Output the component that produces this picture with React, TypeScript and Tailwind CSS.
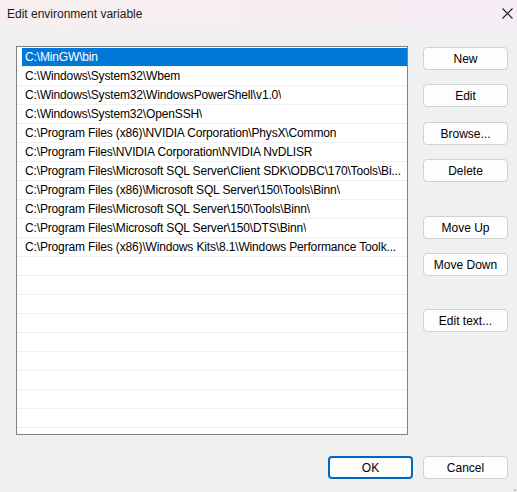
import React from "react";

// Display text as the list shows it (long entries are clipped by the column)
const paths = [
  "C:\\MinGW\\bin",
  "C:\\Windows\\System32\\Wbem",
  "C:\\Windows\\System32\\WindowsPowerShell\\v1.0\\",
  "C:\\Windows\\System32\\OpenSSH\\",
  "C:\\Program Files (x86)\\NVIDIA Corporation\\PhysX\\Common",
  "C:\\Program Files\\NVIDIA Corporation\\NVIDIA NvDLISR",
  "C:\\Program Files\\Microsoft SQL Server\\Client SDK\\ODBC\\170\\Tools\\Bi...",
  "C:\\Program Files (x86)\\Microsoft SQL Server\\150\\Tools\\Binn\\",
  "C:\\Program Files\\Microsoft SQL Server\\150\\Tools\\Binn\\",
  "C:\\Program Files\\Microsoft SQL Server\\150\\DTS\\Binn\\",
  "C:\\Program Files (x86)\\Windows Kits\\8.1\\Windows Performance Toolk...",
];

const TOTAL_ROWS = 20;

const Button: React.FC<{ label: string; primary?: boolean }> = ({ label, primary }) => (
  <button
    className={`w-[85px] h-[23px] shrink-0 rounded-[4px] bg-[#fdfdfd] text-[12px] text-black leading-none ${
      primary ? "border-2 border-[#0067c0]" : "border border-[#d0d0d0]"
    }`}
  >
    {label}
  </button>
);

export default function App() {
  const rows = Array.from({ length: TOTAL_ROWS }, (_, i) => paths[i] ?? "");

  return (
    <div
      className="w-[517px] h-[492px] flex flex-col bg-[#f0f0f0] overflow-hidden relative"
      style={{ fontFamily: '"Liberation Sans", Arial, sans-serif' }}
    >
      {/* Title bar */}
      <div className="h-[27px] shrink-0 flex items-center justify-between pl-[7px] pr-[4px] bg-gradient-to-r from-[#f7efef] to-[#f6ecf4]">
        <span className="text-[12px] text-[#1a1a1a]">Edit environment variable</span>
        <svg width="11" height="11" viewBox="0 0 11 11">
          <path d="M0.5 0.5 L10.5 10.5 M10.5 0.5 L0.5 10.5" stroke="#1a1a1a" strokeWidth="1.1" />
        </svg>
      </div>

      {/* Body */}
      <div className="flex-1 flex flex-col pl-4 pr-[9px] pt-[19px]">
        <div className="flex gap-[15px]">
          {/* Path list */}
          <div className="w-[392px] h-[389px] shrink-0 border border-[#828282] bg-white pt-px overflow-hidden">
            {rows.map((p, i) => (
              <div key={i} className="h-[19px] border-b border-[#f0f0f0] flex">
                <div
                  className={`ml-[5px] flex-1 min-w-0 flex items-center pl-[3px] pr-[2px] text-[12px] tracking-[-0.15px] ${
                    i === 0 ? "bg-[#0078d7] text-white" : "text-black"
                  }`}
                >
                  <span className="truncate">{p}</span>
                </div>
              </div>
            ))}
          </div>

          {/* Action buttons */}
          <div className="flex flex-col pt-px">
            <Button label="New" />
            <div className="h-[14px]" />
            <Button label="Edit" />
            <div className="h-[15px]" />
            <Button label="Browse..." />
            <div className="h-[14px]" />
            <Button label="Delete" />
            <div className="h-[34px]" />
            <Button label="Move Up" />
            <div className="h-[14px]" />
            <Button label="Move Down" />
            <div className="h-[33px]" />
            <Button label="Edit text..." />
          </div>
        </div>

        {/* Dialog buttons */}
        <div className="flex justify-end gap-[10px] mt-[21px]">
          <Button label="OK" primary />
          <Button label="Cancel" />
        </div>
      </div>

      {/* Resize grip */}
      <div className="absolute right-[1px] bottom-[1px] w-[2px] h-[2px] bg-[#bdbdbd]" />
    </div>
  );
}
